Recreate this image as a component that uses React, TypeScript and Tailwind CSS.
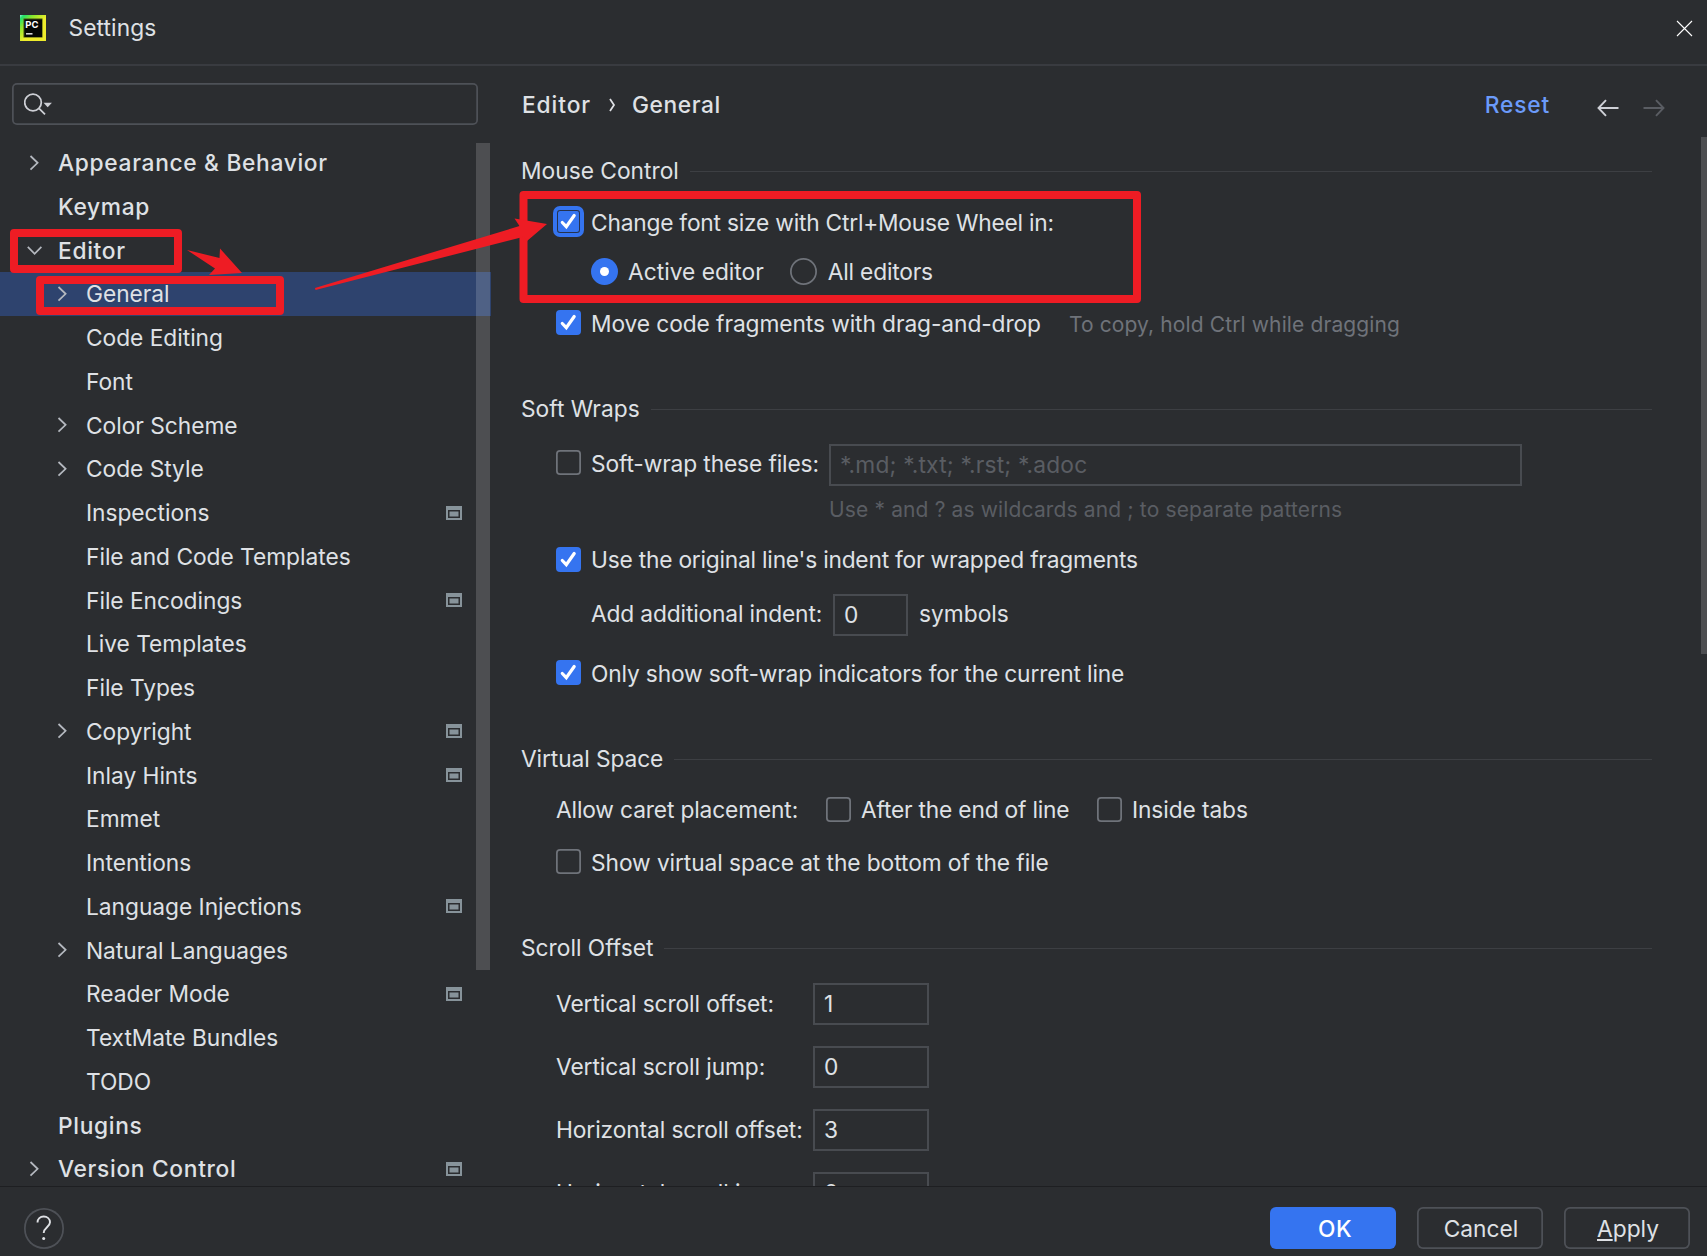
import { ReactNode, useState } from 'react'

interface TreeItem {
  label: string
  level: 0 | 1
  arrow?: 'right' | 'down'
  project?: boolean
}

const treeItems: TreeItem[] = [
  { label: 'Appearance & Behavior', level: 0, arrow: 'right' },
  { label: 'Keymap', level: 0 },
  { label: 'Editor', level: 0, arrow: 'down' },
  { label: 'General', level: 1, arrow: 'right' },
  { label: 'Code Editing', level: 1 },
  { label: 'Font', level: 1 },
  { label: 'Color Scheme', level: 1, arrow: 'right' },
  { label: 'Code Style', level: 1, arrow: 'right' },
  { label: 'Inspections', level: 1, project: true },
  { label: 'File and Code Templates', level: 1 },
  { label: 'File Encodings', level: 1, project: true },
  { label: 'Live Templates', level: 1 },
  { label: 'File Types', level: 1 },
  { label: 'Copyright', level: 1, arrow: 'right', project: true },
  { label: 'Inlay Hints', level: 1, project: true },
  { label: 'Emmet', level: 1 },
  { label: 'Intentions', level: 1 },
  { label: 'Language Injections', level: 1, project: true },
  { label: 'Natural Languages', level: 1, arrow: 'right' },
  { label: 'Reader Mode', level: 1, project: true },
  { label: 'TextMate Bundles', level: 1 },
  { label: 'TODO', level: 1 },
  { label: 'Plugins', level: 0 },
  { label: 'Version Control', level: 0, arrow: 'right', project: true },
]

const offsets = [
  { label: 'Vertical scroll offset:', value: '1' },
  { label: 'Vertical scroll jump:', value: '0' },
  { label: 'Horizontal scroll offset:', value: '3' },
  { label: 'Horizontal scroll jump:', value: '0' },
]

function Logo() {
  return (
    <svg width="26" height="26" viewBox="0 0 26 26">
      <defs>
        <linearGradient id="logo" x1="0" y1="0" x2="0.55" y2="0.55">
          <stop offset="0" stopColor="#8ff5d8" />
          <stop offset="0.15" stopColor="#21e06a" />
          <stop offset="0.5" stopColor="#8fe82c" />
          <stop offset="1" stopColor="#eeec2c" />
        </linearGradient>
      </defs>
      <rect width="26" height="26" fill="url(#logo)" />
      <rect x="3.5" y="3.5" width="19" height="19" fill="#3c4a12" />
      <rect x="4.5" y="4.5" width="17.5" height="17.5" fill="#050805" />
      <text x="5.3" y="13" fill="#fff" fontSize="9.5" fontWeight="700" fontFamily="Inter, sans-serif">
        PC
      </text>
      <rect x="6" y="18" width="6.5" height="1.6" fill="#d5d5d5" />
    </svg>
  )
}

function Arrow({ dir }: { dir: 'right' | 'down' }) {
  return (
    <svg width="16" height="16" viewBox="0 0 16 16" fill="none" stroke="#b4b8bf" strokeWidth="1.75">
      {dir === 'right' ? <path d="M4.5 1 11.6 7.8l-7.1 6.8" /> : <path d="M1.8 4.8 8.6 11.8l6.8-7" />}
    </svg>
  )
}

function ProjectIcon() {
  return (
    <svg width="16" height="14" viewBox="0 0 16 14">
      <path fill="#87939a" fillRule="evenodd" d="M0 0h16v14H0zM2 4v8h12V4z" />
      <rect x="3.5" y="5.5" width="9" height="5" fill="#87939a" />
    </svg>
  )
}

function CheckBox({
  label,
  checked,
  focused,
  labelClass = 'pt-[2px] tracking-[-0.15px]',
}: {
  label: string
  checked?: boolean
  focused?: boolean
  labelClass?: string
}) {
  return (
    <div className="flex h-[25px] items-center gap-[10px]">
      {checked ? (
        <span
          className={`flex shrink-0 items-center justify-center bg-[#3574f0] ${
            focused
              ? 'm-px size-[23px] rounded-[3px] border border-[#25324d] outline-4 outline-[#3574f0]'
              : 'size-[25px] rounded-[4px]'
          }`}
        >
          <svg className="shrink-0" width="25" height="25" viewBox="0 0 25 25" fill="none" stroke="#fff" strokeWidth="3.2">
            <path d="m6.3 13.5 4 4.2L18.2 6.5" strokeLinecap="round" />
          </svg>
        </span>
      ) : (
        <span className="size-[25px] shrink-0 rounded-[4px] shadow-[inset_0_0_0_1.75px_#6f737a]" />
      )}
      <span className={labelClass}>{label}</span>
    </div>
  )
}

function Radio({
  checked,
  label,
  labelClass,
  onClick,
}: {
  checked: boolean
  label: string
  labelClass?: string
  onClick: () => void
}) {
  return (
    <button onClick={onClick} className="flex items-center gap-[10px]">
      <span
        className={`flex size-[27px] items-center justify-center rounded-full ${
          checked ? 'bg-[#3574f0]' : 'shadow-[inset_0_0_0_1.75px_#6f737a]'
        }`}
      >
        {checked && <span className="size-[9px] rounded-full bg-white" />}
      </span>
      <span className={labelClass}>{label}</span>
    </button>
  )
}

function Section({ title, className, children }: { title: string; className: string; children: ReactNode }) {
  return (
    <section className={className}>
      <div className="flex h-7 items-center gap-[11px]">
        <h2 className="pt-px">{title}</h2>
        <div className="mt-[3px] h-px flex-1 bg-[#3d3f43]" />
      </div>
      <div className="pl-[35px]">{children}</div>
    </section>
  )
}

function Field({ value, className }: { value: string; className: string }) {
  return (
    <div className={`flex h-[42px] items-center border-2 border-[#484b50] pb-px pl-[9px] ${className}`}>{value}</div>
  )
}

export default function App() {
  const [selected, setSelected] = useState('General')
  const [scope, setScope] = useState<'active' | 'all'>('active')

  return (
    <div className="relative flex h-[1256px] w-[1707px] flex-col overflow-hidden bg-[#2b2d30] font-['Inter',sans-serif] text-[22.75px] leading-7 whitespace-nowrap text-[#dfe1e5]">
      {/* Title bar */}
      <header className="flex h-[66px] shrink-0 items-center border-b-2 border-[#393b40] pr-[14px] pb-2 pl-5">
        <Logo />
        <span className="ml-[22.5px] tracking-[0.1px]">Settings</span>
        <svg className="ml-auto" width="17" height="17" viewBox="0 0 17 17" stroke="#fff" strokeWidth="1.1">
          <path d="m1 1 15 15M16 1 1 16" />
        </svg>
      </header>

      <div className="flex h-[1120px] shrink-0 overflow-hidden">
        {/* Sidebar */}
        <aside className="relative w-[491px] shrink-0">
          <div className="mt-[17px] ml-3 flex h-[42px] w-[466px] items-center rounded-[5px] pl-[12px] shadow-[inset_0_0_0_1.75px_#4e5157]">
            <svg width="30" height="24" viewBox="0 0 30 24" fill="none" stroke="#ced0d6" strokeWidth="1.75">
              <circle cx="9" cy="10.5" r="8.3" />
              <path d="m15 16.3 6 6" />
              <path d="M19.5 10.8h8.4l-4.2 4.4z" fill="#ced0d6" stroke="none" />
            </svg>
          </div>
          <nav className="mt-[15.75px]">
            {treeItems.map((item) => (
              <button
                key={item.label}
                onClick={() => setSelected(item.label)}
                className={`flex h-[43.75px] w-full items-center pr-[29px] ${
                  item.level === 0 ? 'pl-[26px] font-medium tracking-[0.68px]' : 'pl-[54px] tracking-[-0.03px]'
                } ${selected === item.label ? 'bg-[#2e436e]' : ''}`}
              >
                <span className="w-8">{item.arrow && <Arrow dir={item.arrow} />}</span>
                <span className="pt-px">{item.label}</span>
                {item.project && (
                  <span className="ml-auto">
                    <ProjectIcon />
                  </span>
                )}
              </button>
            ))}
          </nav>
          <div className="absolute top-[77px] right-[1px] h-[827px] w-[14px] bg-white/16" />
        </aside>

        {/* Settings page */}
        <main className="relative flex-1 pr-[55px] pl-[30px]">
          <div className="flex h-[77px] items-center font-medium">
            <span className="pt-px pl-px tracking-[0.9px]">Editor</span>
            <svg className="mr-4 ml-[18px]" width="7" height="14" viewBox="0 0 7 14" fill="none" stroke="#dfe1e5" strokeWidth="1.75">
              <path d="m1 1 4 6-4 6" />
            </svg>
            <span className="pt-px tracking-[0.6px]">General</span>
            <span className="ml-auto pt-px tracking-[0.8px] text-[#6b9bfa]">Reset</span>
            <svg className="mt-[7px] ml-[47px]" width="22" height="18" viewBox="0 0 22 18" fill="none" stroke="#ced0d6" strokeWidth="1.9">
              <path d="M21.5 9H1.5M9 1.2 1.5 9 9 16.8" />
            </svg>
            <svg className="mt-[7px] mr-[-13px] ml-6" width="22" height="18" viewBox="0 0 22 18" fill="none" stroke="#5a5d63" strokeWidth="1.9">
              <path d="M.5 9h20M13 1.2 20.5 9 13 16.8" />
            </svg>
          </div>

          <Section title="Mouse Control" className="mt-[13px]">
            <div className="pt-[25px]">
              <CheckBox
                checked
                focused
                label="Change font size with Ctrl+Mouse Wheel in:"
                labelClass="pt-[2px] tracking-[-0.22px]"
              />
            </div>
            <div className="mt-6 flex h-[27px] items-center gap-[26px] pl-[35px]">
              <Radio label="Active editor" checked={scope === 'active'} onClick={() => setScope('active')} />
              <Radio
                label="All editors"
                labelClass="pl-px tracking-[-0.2px]"
                checked={scope === 'all'}
                onClick={() => setScope('all')}
              />
            </div>
            <div className="mt-[25px] flex h-[25px] items-center">
              <CheckBox checked label="Move code fragments with drag-and-drop" labelClass="pt-[3px] tracking-[-0.09px]" />
              <span className="ml-[28px] pt-[4px] text-[21px] tracking-[0.12px] text-[#6f737a]">
                To copy, hold Ctrl while dragging
              </span>
            </div>
          </Section>

          <Section title="Soft Wraps" className="mt-[59px]">
            <div className="mt-[22px] flex h-[42px] items-center">
              <div className="mb-[5px] w-[273px]">
                <CheckBox label="Soft-wrap these files:" labelClass="pt-[3px] tracking-[-0.13px]" />
              </div>
              <Field value="*.md; *.txt; *.rst; *.adoc" className="w-[693px] tracking-[0.2px] text-[#5a5d63]" />
            </div>
            <p className="mt-[10px] pl-[273px] text-[21px] tracking-[0.14px] text-[#5a5d63]">
              Use * and ? as wildcards and ; to separate patterns
            </p>
            <div className="mt-[23px]">
              <CheckBox
                checked
                label="Use the original line's indent for wrapped fragments"
                labelClass="pt-px tracking-[-0.22px]"
              />
            </div>
            <div className="mt-[22px] flex h-[42px] items-center pl-[35px]">
              <span className="w-[242px] pb-[2px] tracking-[-0.15px]">Add additional indent:</span>
              <Field value="0" className="w-[75px]" />
              <span className="ml-[11px] pb-[2px]">symbols</span>
            </div>
            <div className="mt-6">
              <CheckBox
                checked
                label="Only show soft-wrap indicators for the current line"
                labelClass="pt-[2px] tracking-[-0.16px]"
              />
            </div>
          </Section>

          <Section title="Virtual Space" className="mt-[59px] tracking-[-0.1px]">
            <div className="mt-[25px] flex h-[25px] items-center">
              <span className="w-[270px] tracking-[-0.15px]">Allow caret placement:</span>
              <div className="w-[271px]">
                <CheckBox label="After the end of line" labelClass="tracking-[-0.2px]" />
              </div>
              <CheckBox label="Inside tabs" labelClass="tracking-[-0.1px]" />
            </div>
            <div className="mt-[27px]">
              <CheckBox label="Show virtual space at the bottom of the file" labelClass="pt-[2px] tracking-[-0.08px]" />
            </div>
          </Section>

          <Section title="Scroll Offset" className="mt-[59px]">
            <div className="mt-[22px] flex flex-col gap-[21px]">
              {offsets.map((o) => (
                <div key={o.label} className="flex h-[42px] items-center">
                  <span className="w-[257px] pb-px tracking-[-0.1px]">{o.label}</span>
                  <Field value={o.value} className="w-[116px]" />
                </div>
              ))}
            </div>
          </Section>
          <div className="absolute top-[71px] right-0 h-[517px] w-[6px] bg-[#4d4e51]" />
        </main>
      </div>

      {/* Footer */}
      <footer className="flex flex-1 items-center gap-[21px] border-t border-[#1e1f22] pt-[13px] pr-[17px] pl-6">
        <button className="flex h-[41px] w-10 items-center justify-center rounded-full shadow-[inset_0_0_0_1.75px_#4e5157]">
          <svg width="16" height="26" viewBox="0 0 16 26" fill="none" stroke="#dfe1e5" strokeWidth="1.9">
            <path d="M1.5 7.5C1.5 3.7 4.2 1.5 7.700 1.5s6.300 2.300 6.300 5.800c0 4.800-6.300 5.300-6.300 10.700" />
            <circle cx="7.7" cy="23.5" r="1.5" fill="#dfe1e5" stroke="none" />
          </svg>
        </button>
        <button className="ml-auto h-[42px] w-[126px] rounded-[6px] bg-[#3574f0] pt-px pl-[4px] font-medium tracking-[0.5px] text-white">
          OK
        </button>
        <button className="h-[42px] w-[126px] rounded-[6px] pt-px pl-[2px] shadow-[inset_0_0_0_1.75px_#4e5157]">Cancel</button>
        <button className="h-[42px] w-[126px] rounded-[6px] pt-px pl-[2px] shadow-[inset_0_0_0_1.75px_#4e5157]">
          <span className="underline decoration-2 underline-offset-2">A</span>pply
        </button>
      </footer>

      {/* Annotations */}
      <div className="pointer-events-none absolute inset-0">
        <svg width="1707" height="1256" viewBox="0 0 1707 1256" fill="none" stroke="#ee1c24" strokeWidth="8" strokeLinejoin="round">
          <rect x="14" y="233" width="164" height="36" />
          <rect x="40" y="280" width="240" height="31" />
          <rect x="523.5" y="195" width="613.5" height="104" />
          <g fill="#ee1c24" stroke="none">
            <path d="m187 250 32.5 8 .5-9.5L242 273l-33 2 6-6.5z" />
            <path d="M315 288 519.5 226l-5-7.5L547 224l-20 17-3-4.500-5 1.500L315.500 290z" />
          </g>
        </svg>
      </div>
    </div>
  )
}
